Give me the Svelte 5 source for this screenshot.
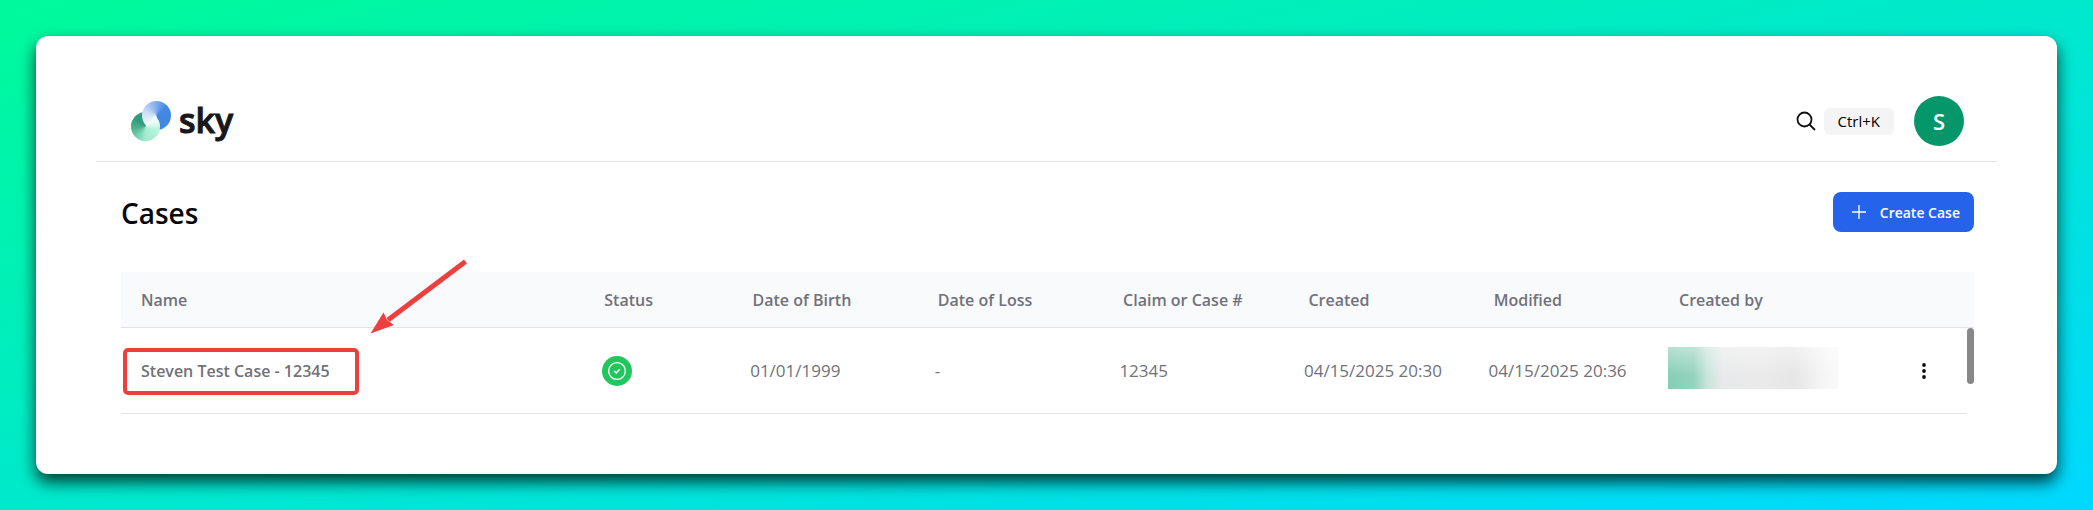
<script>
  const columns = [
    'Name',
    'Status',
    'Date of Birth',
    'Date of Loss',
    'Claim or Case #',
    'Created',
    'Modified',
    'Created by',
  ];

  const cases = [
    {
      name: 'Steven Test Case - 12345',
      birth: '01/01/1999',
      loss: '-',
      claim: '12345',
      created: '04/15/2025 20:30',
      modified: '04/15/2025 20:36',
    },
  ];
</script>

<div class="backdrop">
  <div class="window">
    <header>
      <a class="brand" href="#home">
        <span class="mark" aria-hidden="true">
          <span class="disc green"></span>
          <span class="disc blue"></span>
          <span class="disc green over"></span>
        </span>
        <span class="word">sky</span>
      </a>
      <div class="tools">
        <button class="search" aria-label="Search">
          <svg width="20" height="20" viewBox="0 0 20 20" fill="none" stroke="#111" stroke-width="1.8">
            <circle cx="8.5" cy="8.5" r="7" />
            <path d="M13.5 13.5l5.5 5.5" />
          </svg>
          <kbd>Ctrl+K</kbd>
        </button>
        <button class="avatar" aria-label="Account">S</button>
      </div>
    </header>

    <main>
      <div class="heading">
        <h1>Cases</h1>
        <button class="create">
          <svg width="14" height="14" viewBox="0 0 14 14" stroke="#fff" stroke-width="1.3" aria-hidden="true">
            <path d="M7 0v14M0 7h14" />
          </svg>
          Create Case
        </button>
      </div>

      <div class="list">
        <table>
          <thead>
            <tr>
              {#each columns as column}
                <th scope="col">{column}</th>
              {/each}
              <td></td>
            </tr>
          </thead>
          <tbody>
            {#each cases as item}
              <tr>
                <td class="name"><a href="#case">{item.name}</a></td>
                <td>
                  <svg class="status" role="img" aria-label="Complete" width="30" height="30" viewBox="0 0 30 30" fill="none" stroke="#fff">
                    <circle cx="15" cy="15" r="15" fill="#22c55e" stroke="none" />
                    <circle cx="15" cy="15" r="8.4" stroke-width="1.4" />
                    <path d="M12.2 15l2 2 3.6-3.8" stroke-width="1.5" />
                  </svg>
                </td>
                <td>{item.birth}</td>
                <td>{item.loss}</td>
                <td>{item.claim}</td>
                <td>{item.created}</td>
                <td>{item.modified}</td>
                <td class="author"><div class="redacted"></div></td>
                <td class="actions">
                  <button aria-label="More actions">
                    <svg width="4" height="16" viewBox="0 0 4 16" fill="#111">
                      <circle cx="2" cy="2" r="1.9" />
                      <circle cx="2" cy="8" r="1.9" />
                      <circle cx="2" cy="14" r="1.9" />
                    </svg>
                  </button>
                </td>
              </tr>
            {/each}
          </tbody>
        </table>
        <svg class="arrow" width="100" height="78" viewBox="0 0 100 78" aria-hidden="true">
          <path d="M95.5 3.5L18 62" stroke="#ef3e3e" stroke-width="5" />
          <path d="M0.5 75.5L13.5 54.5L17 62L24 67Z" fill="#ef3e3e" />
        </svg>
      </div>
    </main>
  </div>
</div>

<style>
  :global(body) {
    font-family: 'Open Sans', 'Noto Sans', sans-serif;
    color: #09090b;
  }

  .backdrop {
    box-sizing: border-box;
    min-height: 100vh;
    padding: 36px;
    background: linear-gradient(to bottom right, #00fa9a, #00d8ff);
  }

  .window {
    padding: 45px 60px 60px;
    background: #fff;
    border-radius: 12px;
    box-shadow: 0 8px 16px rgb(0 0 0 / 75%);
  }

  button {
    font: inherit;
    border: 0;
    padding: 0;
    background: none;
    cursor: pointer;
  }

  a {
    color: inherit;
    text-decoration: none;
  }

  header {
    display: flex;
    align-items: center;
    justify-content: space-between;
    height: 80px;
    padding: 0 33px 0 35px;
    border-bottom: 1px solid #e4e4e7;
  }

  .brand {
    display: flex;
    align-items: center;
    gap: 8px;
  }

  .mark {
    position: relative;
    width: 40px;
    height: 40px;
  }

  .disc {
    position: absolute;
    width: 29px;
    height: 29px;
    border-radius: 50%;
  }

  .green {
    left: 0;
    bottom: 0;
    background: conic-gradient(#2f9c7c, #fff 20deg, #f4fdf9 60deg, #b4f3dc 110deg, #a3ebd0 180deg, #4fb391 260deg, #2f9c7c 310deg, #2f9c7c);
  }

  .blue {
    right: 0;
    top: 0;
    background: conic-gradient(#7eabec, #4388e3 50deg, #3f86e2 165deg, #fff 195deg, #f4f8ff 220deg, #c9dcf8 290deg, #7eabec);
  }

  .green.over {
    background: conic-gradient(#fff, #fff 40deg, #d9f9ed 80deg, #b4f3dc 110deg, #a3ebd0 180deg, #4fb391 260deg, #2f9c7c 310deg, #2f9c7c);
    clip-path: polygon(29px 0, 29px 29px, 0 29px);
  }

  .word {
    font-size: 34px;
    line-height: 40px;
    font-weight: 600;
    color: #18181b;
    -webkit-text-stroke: 1px #18181b;
    padding-bottom: 2px;
  }

  .tools,
  .search {
    display: flex;
    align-items: center;
  }

  .tools {
    gap: 20px;
  }

  .search {
    gap: 8px;
  }

  kbd {
    padding: 0 14px;
    border-radius: 6px;
    background: #f4f4f5;
    font-family: inherit;
    font-size: 15px;
    line-height: 27px;
  }

  .avatar {
    width: 50px;
    height: 50px;
    border-radius: 50%;
    background: #059669;
    color: #fff;
    font-size: 22px;
    font-weight: 600;
  }

  main {
    padding: 30px 23px 0 25px;
  }

  .heading {
    display: flex;
    align-items: center;
    justify-content: space-between;
    margin-bottom: 40px;
  }

  h1 {
    margin: 0;
    padding-top: 2px;
    font-size: 28px;
    line-height: 38px;
    font-weight: 600;
  }

  .create {
    display: flex;
    align-items: center;
    gap: 14px;
    height: 40px;
    padding: 0 14px 0 19px;
    border-radius: 8px;
    background: #2563eb;
    color: #fff;
    font-size: 14px;
    font-weight: 600;
  }

  .list {
    position: relative;
  }

  table,
  thead {
    display: block;
  }

  table {
    color: #71717a;
    font-size: 17px;
    line-height: 24px;
  }

  tr {
    display: grid;
    grid-template-columns: 25fr 8fr repeat(6, 10fr) 7fr;
    align-items: center;
    border-bottom: 1px solid #e4e4e7;
  }

  thead tr {
    height: 55px;
    background: #f8fafc;
  }

  tbody {
    display: grid;
    grid-template-columns: 1fr 7px;
  }

  tbody::after {
    content: '';
    height: 56px;
    border-radius: 4px;
    background: #888;
  }

  tbody tr {
    height: 85px;
  }

  th,
  td {
    min-width: 0;
    padding: 0 0 0 20px;
    text-align: left;
    white-space: nowrap;
  }

  th,
  .name {
    font-size: 16px;
    font-weight: 600;
  }

  .name {
    position: relative;
  }

  .name::before {
    content: '';
    position: absolute;
    left: 2px;
    top: -11px;
    width: 228px;
    height: 39px;
    border: 4px solid #ef3e3e;
    border-radius: 5px;
    pointer-events: none;
  }

  .status {
    display: block;
  }

  .author {
    align-self: start;
    padding: 19px 0 0 15px;
  }

  .redacted {
    height: 42px;
    max-width: 171px;
    background:
      linear-gradient(to bottom, rgb(255 255 255 / 40%), rgb(255 255 255 / 0%) 70%),
      linear-gradient(to right, #85ceb5, #94d2bd 15%, #c8e4da 23%, #e8e9ea 32%, #eaeaea 55%, #e6e6e6 74%, #f8f8f8 95%);
  }

  .actions {
    padding: 0 41px 0 0;
  }

  .actions button {
    display: block;
    margin-left: auto;
  }

  .actions svg {
    display: block;
  }

  .arrow {
    position: absolute;
    left: 249px;
    top: -14px;
    pointer-events: none;
  }
</style>
